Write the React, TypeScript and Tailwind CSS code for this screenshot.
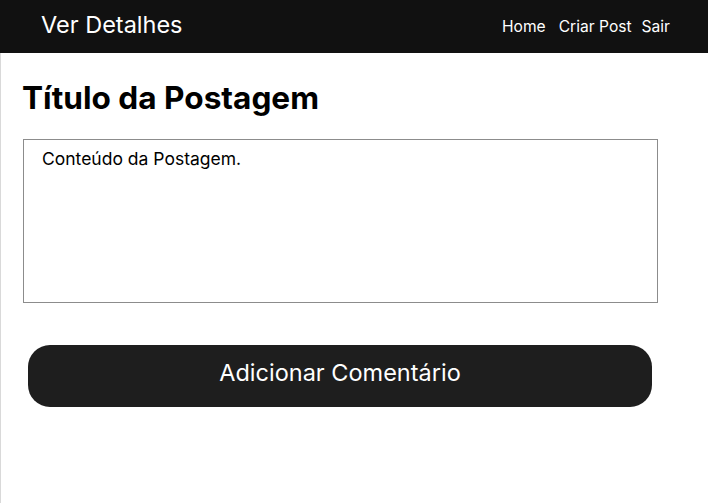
export default function App() {
  return (
    <div className="min-h-screen bg-white font-['Inter',sans-serif]">
      <header className="h-[53px] bg-[#111111] flex items-center justify-between pl-[41px] pr-[38px]">
        <h1 className="text-white text-[23.5px] leading-none mb-[4px]">Ver Detalhes</h1>
        <nav className="flex items-center text-white text-[15.6px] leading-none">
          <a href="#" className="mr-[13px]">Home</a>
          <a href="#" className="mr-[10px]">Criar Post</a>
          <a href="#">Sair</a>
        </nav>
      </header>

      <main className="min-h-[450px] border-l border-[#d9d9d9] pl-[21px] pr-[51px] pt-[27px]">
        <h2 className="text-[31.6px] leading-[36px] font-bold text-black">Título da Postagem</h2>

        <div className="mt-[23px] ml-[1px] h-[164px] w-[635px] border border-[#8c8c8c] pl-[18px] pt-[9px]">
          <p className="text-[17.5px] text-black leading-[20px]">Conteúdo da Postagem.</p>
        </div>

        <button className="mt-[42px] ml-[6px] h-[62px] w-[624px] rounded-[22px] bg-[#1e1e1e] text-white text-[23.5px] leading-none flex items-center justify-center pb-[6px]">
          Adicionar Comentário
        </button>
      </main>
    </div>
  );
}
